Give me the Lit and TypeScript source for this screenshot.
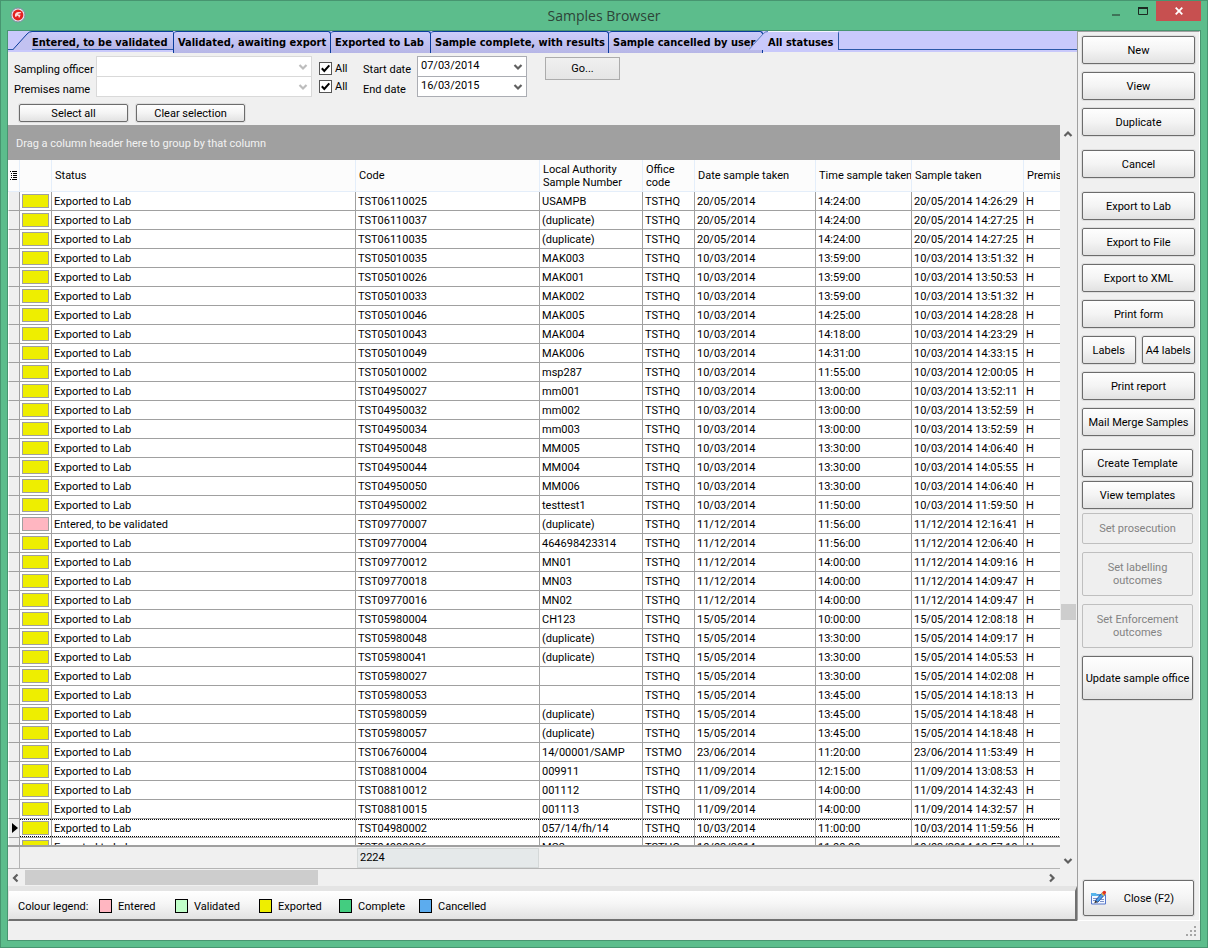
import { LitElement, html, css, svg, nothing } from "lit";
import { customElement, state } from "lit/decorators.js";
import { classMap } from "lit/directives/class-map.js";

type Status = "exported" | "entered";

interface Sample {
  status: Status;
  code: string;
  local: string;
  office: string;
  date: string;
  time: string;
  taken: string;
}

const STATUS_TEXT: Record<Status, string> = {
  exported: "Exported to Lab",
  entered: "Entered, to be validated",
};

const SAMPLES: Sample[] = `TST06110025|USAMPB|TSTHQ|20/05/2014|14:24:00|14:26:29
TST06110037|(duplicate)|TSTHQ|20/05/2014|14:24:00|14:27:25
TST06110035|(duplicate)|TSTHQ|20/05/2014|14:24:00|14:27:25
TST05010035|MAK003|TSTHQ|10/03/2014|13:59:00|13:51:32
TST05010026|MAK001|TSTHQ|10/03/2014|13:59:00|13:50:53
TST05010033|MAK002|TSTHQ|10/03/2014|13:59:00|13:51:32
TST05010046|MAK005|TSTHQ|10/03/2014|14:25:00|14:28:28
TST05010043|MAK004|TSTHQ|10/03/2014|14:18:00|14:23:29
TST05010049|MAK006|TSTHQ|10/03/2014|14:31:00|14:33:15
TST05010002|msp287|TSTHQ|10/03/2014|11:55:00|12:00:05
TST04950027|mm001|TSTHQ|10/03/2014|13:00:00|13:52:11
TST04950032|mm002|TSTHQ|10/03/2014|13:00:00|13:52:59
TST04950034|mm003|TSTHQ|10/03/2014|13:00:00|13:52:59
TST04950048|MM005|TSTHQ|10/03/2014|13:30:00|14:06:40
TST04950044|MM004|TSTHQ|10/03/2014|13:30:00|14:05:55
TST04950050|MM006|TSTHQ|10/03/2014|13:30:00|14:06:40
TST04950002|testtest1|TSTHQ|10/03/2014|11:50:00|11:59:50
TST09770007|(duplicate)|TSTHQ|11/12/2014|11:56:00|12:16:41|entered
TST09770004|464698423314|TSTHQ|11/12/2014|11:56:00|12:06:40
TST09770012|MN01|TSTHQ|11/12/2014|14:00:00|14:09:16
TST09770018|MN03|TSTHQ|11/12/2014|14:00:00|14:09:47
TST09770016|MN02|TSTHQ|11/12/2014|14:00:00|14:09:47
TST05980004|CH123|TSTHQ|15/05/2014|10:00:00|12:08:18
TST05980048|(duplicate)|TSTHQ|15/05/2014|13:30:00|14:09:17
TST05980041|(duplicate)|TSTHQ|15/05/2014|13:30:00|14:05:53
TST05980027||TSTHQ|15/05/2014|13:30:00|14:02:08
TST05980053||TSTHQ|15/05/2014|13:45:00|14:18:13
TST05980059|(duplicate)|TSTHQ|15/05/2014|13:45:00|14:18:48
TST05980057|(duplicate)|TSTHQ|15/05/2014|13:45:00|14:18:48
TST06760004|14/00001/SAMP|TSTMO|23/06/2014|11:20:00|11:53:49
TST08810004|009911|TSTHQ|11/09/2014|12:15:00|13:08:53
TST08810012|001112|TSTHQ|11/09/2014|14:00:00|14:32:43
TST08810015|001113|TSTHQ|11/09/2014|14:00:00|14:32:57
TST04980002|057/14/fh/14|TSTHQ|10/03/2014|11:00:00|11:59:56
TST04980036|MC2|TSTHQ|10/03/2014|11:00:00|13:57:19`
  .split("\n")
  .map((line) => {
    const [code, local, office, date, time, clock, status] = line.split("|");
    return { status: (status ?? "exported") as Status, code, local, office, date, time, taken: `${date} ${clock}` };
  });

const TABS = [
  "Entered, to be validated",
  "Validated, awaiting export",
  "Exported to Lab",
  "Sample complete, with results",
  "Sample cancelled by user",
  "All statuses",
];

const LEGEND = [
  ["entered", "Entered"],
  ["validated", "Validated"],
  ["exported", "Exported"],
  ["complete", "Complete"],
  ["cancelled", "Cancelled"],
];

const chevron = (dir: "up" | "down" | "left" | "right") => {
  const d = {
    up: "M1.5 6 5 2.5 8.5 6",
    down: "M1.5 3 5 6.5 8.5 3",
    left: "M6.5 1.5 3 5 6.5 8.5",
    right: "M3 1.5 6.5 5 3 8.5",
  }[dir];
  return html`<svg class="chev" width="10" height="10" viewBox="0 0 10 10" aria-hidden="true">${svg`<path d=${d} fill="none" stroke="currentColor" stroke-width="2.2"/>`}</svg>`;
};

const shared = css`
  :host {
    box-sizing: border-box;
    font: 11px/13px Roboto, "Liberation Sans", sans-serif;
    color: #000;
  }
  *,
  *::before,
  *::after {
    box-sizing: border-box;
  }
  button,
  select,
  input {
    font: inherit;
    color: inherit;
    margin: 0;
  }
  svg {
    display: block;
  }
  .btn {
    padding: 0 2px;
    border: 1px solid #6c6c6c;
    border-radius: 2px;
    background: linear-gradient(#fefefe, #f4f4f4 50%, #e2e2e2);
    box-shadow: 0 0 0 1px #dedede;
    text-align: center;
  }
  .btn:disabled {
    border-color: #bfbfbf;
    background: #efefef;
    box-shadow: none;
    color: #838383;
  }
`;

@customElement("sample-tabs")
class SampleTabs extends LitElement {
  @state() private active = 5;

  static styles = [
    shared,
    css`
      :host {
        display: block;
        background: #c9c9fb;
        padding-bottom: 2px;
      }
      .tabs {
        display: grid;
        grid-template-columns: 161px 157px 100px 178px 154px 76px;
        height: 19px;
        padding-left: 5px;
        border-bottom: 1px solid #2c58a8;
      }
      .tab {
        display: flex;
        min-width: 0;
        padding: 0 0 0 4px;
        border: 0;
        border-top: 1px solid #0a3c9c;
        border-right: 1px solid #0a3c9c;
        border-top-right-radius: 3px;
        border-top-left-radius: 3px;
        background: linear-gradient(#cdcdfb, #b6b6e6);
        font: bold 11px/21px "DejaVu Sans Condensed", "DejaVu Sans", sans-serif;
        white-space: nowrap;
      }
      .tab.slanted {
        padding: 0;
        border-top: 0;
        background: none;
      }
      .face {
        flex: 1;
        text-align: left;
        border-top: 1px solid #0a3c9c;
        background: linear-gradient(#cdcdfb, #b6b6e6);
        height: 18px;
      }
      .tab.active {
        position: relative;
        z-index: 1;
        height: 19px;
        margin-left: -14px;
        border-right-color: #2c58a8;
      }
      .active .face {
        height: 19px;
        border-top-color: #f6f6ff;
        background: #c9c9fb;
      }
    `,
  ];

  render() {
    return html`<div class="tabs" role="tablist">
      ${TABS.map((t, i) => {
        const on = i === this.active;
        const slanted = i === 0 || on;
        return html`<button
          type="button"
          role="tab"
          aria-selected=${on}
          class=${classMap({ tab: true, slanted, active: on })}
          @click=${() => (this.active = i)}
        >
          ${slanted
            ? html`<svg width="19" height="19" viewBox="0 0 19 19" aria-hidden="true">
                <path d="M0 19 14 3Q16 .5 19 .5V19Z" fill="${on ? "#c9c9fb" : "#c2c2f1"}" />
                <path d="M0 18.5 14 3Q16 .5 19 .5" fill="none" stroke="${on ? "#5a7cc0" : "#0a3c9c"}" />
              </svg>`
            : nothing}
          ${slanted ? html`<span class="face">${t}</span>` : html`<span>${t}</span>`}
        </button>`;
      })}
    </div>`;
  }
}

@customElement("sample-filters")
class SampleFilters extends LitElement {
  static styles = [
    shared,
    css`
      :host {
        display: block;
        padding: 4px 6px 3px;
      }
      .fields {
        display: flex;
        align-items: flex-start;
      }
      .labels {
        display: grid;
        grid-auto-rows: 20px;
        align-items: center;
        padding-top: 3px;
      }
      .who {
        width: 82px;
      }
      .when {
        width: 54px;
      }
      .combos {
        display: grid;
        grid-auto-rows: 20px;
        padding-bottom: 1px;
      }
      .officer {
        width: 216px;
      }
      .dates {
        width: 110px;
      }
      .combo {
        position: relative;
        height: 21px;
        color: #606060;
      }
      .combo.off {
        color: #bdbdbd;
      }
      select {
        width: 100%;
        height: 21px;
        padding: 0 20px 2px 3px;
        border: 1px solid #abadb3;
        border-radius: 0;
        background: #fff;
        appearance: none;
        color: #000;
        font-size: 11px;
        opacity: 1;
      }
      .off select {
        border-color: #d9d9d9;
      }
      .chev {
        position: absolute;
        right: 4px;
        top: 6px;
        pointer-events: none;
      }
      .checks {
        display: grid;
        grid-auto-rows: 18px;
        padding: 3px 0 0 7px;
        width: 51px;
      }
      .check {
        display: flex;
        align-items: center;
        gap: 3px;
      }
      .check input {
        appearance: none;
        width: 13px;
        height: 13px;
        border: 1px solid #555;
        background: #fff;
      }
      .check input:checked {
        background: #fff
          url("data:image/svg+xml,%3Csvg xmlns='http://www.w3.org/2000/svg' viewBox='0 0 11 11'%3E%3Cpath d='M1.8 5.3 4.3 8 9.3 2.3' fill='none' stroke='%23000' stroke-width='2'/%3E%3C/svg%3E");
      }
      .go {
        width: 75px;
        height: 23px;
        margin: 1px 0 0 18px;
        border: 1px solid #acacac;
        background: linear-gradient(#f0f0f0, #e5e5e5);
      }
      .actions {
        display: flex;
        gap: 8px;
        padding: 5px 5px 0;
      }
      .actions .btn {
        width: 109px;
        height: 18px;
      }
    `,
  ];

  render() {
    return html`
      <div class="fields">
        <div class="labels who">
          <label for="officer">Sampling officer</label>
          <label for="premises">Premises name</label>
        </div>
        <div class="combos officer">
          <div class="combo off"><select id="officer" disabled><option></option></select>${chevron("down")}</div>
          <div class="combo off"><select id="premises" disabled><option></option></select>${chevron("down")}</div>
        </div>
        <div class="checks">
          <label class="check"><input type="checkbox" checked />All</label>
          <label class="check"><input type="checkbox" checked />All</label>
        </div>
        <div class="labels when">
          <label for="start">Start date</label>
          <label for="end">End date</label>
        </div>
        <div class="combos dates">
          <div class="combo"><select id="start"><option>07/03/2014</option></select>${chevron("down")}</div>
          <div class="combo"><select id="end"><option>16/03/2015</option></select>${chevron("down")}</div>
        </div>
        <button type="button" class="go">Go...</button>
      </div>
      <div class="actions">
        <button type="button" class="btn">Select all</button>
        <button type="button" class="btn">Clear selection</button>
      </div>
    `;
  }
}

@customElement("sample-grid")
class SampleGrid extends LitElement {
  @state() private current = 33;

  static styles = [
    shared,
    css`
      :host {
        display: grid;
        grid-template-columns: minmax(0, 1fr) 17px;
        grid-template-rows: minmax(0, 1fr) 17px;
        min-height: 0;
        background: #f0f0f0;
      }
      .view {
        display: flex;
        flex-direction: column;
        min-height: 0;
      }
      .group {
        flex: none;
        padding: 0 8px;
        background: #a0a0a0;
        color: #f2f2f2;
        line-height: 37px;
        height: 35px;
      }
      .rows {
        flex: 1;
        min-height: 0;
        overflow: hidden;
        background: #fff;
      }
      table {
        width: 100%;
        table-layout: fixed;
        border-collapse: separate;
        border-spacing: 0;
      }
      .c-mark {
        width: 12px;
      }
      .c-colour {
        width: 32px;
      }
      .c-status {
        width: 304px;
      }
      .c-code {
        width: 184px;
      }
      .c-local {
        width: 103px;
      }
      .c-office {
        width: 52px;
      }
      .c-date {
        width: 121px;
      }
      .c-time {
        width: 96px;
      }
      .c-taken {
        width: 112px;
      }
      th {
        height: 32px;
        padding: 0 0 0 3px;
        border-right: 1px solid #e4eefa;
        border-bottom: 1px solid #e4eefa;
        background: #fcfcfc;
        font-weight: normal;
        text-align: left;
        white-space: nowrap;
        overflow: hidden;
        vertical-align: middle;
      }
      th:first-child {
        padding-left: 2px;
      }
      td {
        height: 19px;
        padding: 2px 0 0 2px;
        border-right: 1px solid #a0a0a0;
        border-bottom: 1px solid #a0a0a0;
        line-height: 16px;
        white-space: nowrap;
        overflow: hidden;
      }
      th:last-child,
      td:last-child {
        border-right: 0;
      }
      .mark {
        padding: 0 0 0 3px;
        border-left: 1px solid #fff;
        background: #efefef;
      }
      .colour {
        padding: 0 0 0 2px;
      }
      .current td:not(.mark) {
        background:
          repeating-linear-gradient(90deg, #000 0 1px, #fff 1px 2px) 0 0 / 100% 1px no-repeat,
          repeating-linear-gradient(90deg, #000 0 1px, #fff 1px 2px) 0 100% / 100% 1px no-repeat;
        background-origin: padding-box;
      }
      .swatch {
        display: block;
        width: 27px;
        height: 14px;
        border: 1px solid #a0a0a0;
      }
      .exported {
        background: #eeee00;
      }
      .entered {
        background: #ffb6c1;
      }
      .summary {
        flex: none;
        display: grid;
        grid-template-columns: 12px 337px 182px;
        height: 24px;
        border-top: 2px solid #a0a0a0;
        border-bottom: 1px solid #b4b4b4;
      }
      .gutter {
        border-right: 1px solid #b4b4b4;
      }
      .count {
        grid-column: 3;
        margin: 1px 0;
        padding-left: 2px;
        border: 1px solid #d4d8d8;
        background: #e5e9ea;
        line-height: 18px;
      }
      .vbar,
      .hbar {
        display: flex;
        align-items: center;
        color: #606060;
      }
      .vbar {
        flex-direction: column;
        padding: 5px 1px 3px 0;
      }
      .vtrack {
        flex: 1;
        width: 15px;
        display: grid;
        grid-template-rows: 465fr 16px 236fr;
      }
      .vthumb {
        grid-row: 2;
        background: #cdcdcd;
      }
      .hbar {
        padding: 0 3px;
      }
      .htrack {
        flex: 1;
        height: 15px;
        margin: 0 4px;
        display: grid;
        grid-template-columns: 293fr 725fr;
      }
      .hthumb {
        background: #cdcdcd;
      }
    `,
  ];

  render() {
    return html`
      <div class="view">
        <div class="group">Drag a column header here to group by that column</div>
        <div class="rows">
          <table>
            <colgroup>
              ${["mark", "colour", "status", "code", "local", "office", "date", "time", "taken", "rest"].map(
                (c) => html`<col class="c-${c}" />`,
              )}
            </colgroup>
            <thead>
              <tr>
                <th>
                  <svg width="8" height="10" viewBox="0 0 8 10" aria-hidden="true">
                    <path d="M0 .5h1M2 .5h5M1 2.5h1M3 2.5h4M1 4.5h1M3 4.5h4M1 6.5h1M3 6.5h4M0 8.5h1M2 8.5h5" stroke="#000" />
                  </svg>
                </th>
                <th></th>
                <th>Status</th>
                <th>Code</th>
                <th>Local Authority<br />Sample Number</th>
                <th>Office<br />code</th>
                <th>Date sample taken</th>
                <th>Time sample taken</th>
                <th>Sample taken</th>
                <th>Premises</th>
              </tr>
            </thead>
            <tbody>
              ${SAMPLES.map(
                (s, i) => html`<tr class=${classMap({ current: i === this.current })} @click=${() => (this.current = i)}>
                  <td class="mark">
                    ${i === this.current
                      ? html`<svg width="6" height="10" viewBox="0 0 6 10" aria-hidden="true"><path d="M0 0 6 5 0 10Z" /></svg>`
                      : nothing}
                  </td>
                  <td class="colour"><span class="swatch ${s.status}"></span></td>
                  <td>${STATUS_TEXT[s.status]}</td>
                  <td>${s.code}</td>
                  <td>${s.local}</td>
                  <td>${s.office}</td>
                  <td>${s.date}</td>
                  <td>${s.time}</td>
                  <td>${s.taken}</td>
                  <td>H</td>
                </tr>`,
              )}
            </tbody>
          </table>
        </div>
        <div class="summary">
          <span class="gutter"></span>
          <span class="count">2224</span>
        </div>
      </div>
      <div class="vbar">
        ${chevron("up")}
        <div class="vtrack"><span class="vthumb"></span></div>
        ${chevron("down")}
      </div>
      <div class="hbar">
        ${chevron("left")}
        <div class="htrack"><span class="hthumb"></span></div>
        ${chevron("right")}
      </div>
    `;
  }
}

@customElement("sample-actions")
class SampleActions extends LitElement {
  static styles = [
    shared,
    css`
      :host {
        display: flex;
        flex-direction: column;
        padding: 4px 4px 4px 4px;
        border-left: 1px solid #a0a0a0;
        border-top: 1px solid #a0a0a0;
        border-bottom: 1px solid #fff;
        border-right: 1px solid #fff;
      }
      .set {
        display: grid;
        gap: 8px;
        grid-auto-rows: 28px;
        margin-bottom: 14px;
      }
      .pair {
        display: grid;
        grid-template-columns: 1fr 1fr;
        gap: 6px;
      }
      .pair .btn {
        padding: 0;
        white-space: nowrap;
      }
      .last {
        margin-bottom: 13px;
      }
      .tight {
        gap: 4px;
        margin: 0 2px 8px 0;
      }
      .tight .btn:disabled {
        height: 31px;
      }
      .tall {
        grid-auto-rows: 44px;
        margin: 3px 2px 0 0;
      }
      .tall .btn {
        padding: 0;
      }
      .close {
        display: flex;
        align-items: center;
        height: 36px;
        margin: auto 1px 0;
        padding: 0 19px 0 6px;
        justify-content: space-between;
      }
    `,
  ];

  private btn(label: unknown, disabled = false) {
    return html`<button type="button" class="btn" ?disabled=${disabled}>${label}</button>`;
  }

  render() {
    return html`
      <div class="set">${["New", "View", "Duplicate"].map((l) => this.btn(l))}</div>
      <div class="set">${this.btn("Cancel")}</div>
      <div class="set last">
        ${["Export to Lab", "Export to File", "Export to XML", "Print form"].map((l) => this.btn(l))}
        <div class="pair">${this.btn("Labels")}${this.btn("A4 labels")}</div>
        ${["Print report", "Mail Merge Samples"].map((l) => this.btn(l))}
      </div>
      <div class="set tight">
        ${this.btn("Create Template")} ${this.btn("View templates")} ${this.btn("Set prosecution", true)}
      </div>
      <div class="set tall">
        ${this.btn(html`Set labelling<br />outcomes`, true)} ${this.btn(html`Set Enforcement<br />outcomes`, true)}
        ${this.btn("Update sample office")}
      </div>
      <button type="button" class="btn close">
        <svg width="17" height="16" viewBox="0 0 17 16" aria-hidden="true">
          <path d="M1.5 3.5h4l1 1h9v9.5h-14Z" fill="#f4f8ff" stroke="#5577cc" />
          <path d="M1 3h5l1 1.5h8V6H1Z" fill="#58b4ea" />
          <path d="M3 8.5h4M3 10.5h3M10 11.5h4M11 9.5h3" stroke="#7a90c8" />
          <path d="M5.6 10.4 11.6 3.4 14 5.4 7.8 12.2Z" fill="#4aa0e8" stroke="#2b4f9a" />
          <path d="M4.2 13.2 5.4 10.4 7.8 12.2Z" fill="#333" />
          <path d="m11.2 3.8 1-1 2.4 2.1-1 1Z" fill="#f0c040" />
          <path d="m12 2.8 1.2-1.6q1.2-1 2.4 0 1 1.1.1 2.2l-1.2 1.5Z" fill="#e0301c" />
        </svg>
        <span>Close (F2)</span>
      </button>
    `;
  }
}

@customElement("app-root")
class AppRoot extends LitElement {
  static styles = [
    shared,
    css`
      :host {
        display: flex;
        flex-direction: column;
        height: 100vh;
        padding: 0 6px 6px;
        border: 1px solid #479570;
        background: #5cbd8c;
      }
      .title {
        flex: none;
        display: grid;
        grid-template-columns: 1fr auto 1fr;
        height: 29px;
      }
      .logo {
        margin: 6px 0 0 3px;
      }
      h1 {
        margin: 0;
        font: 14px/29px "Open Sans", "Noto Sans", sans-serif;
        color: #2d4438;
      }
      .controls {
        display: flex;
        justify-content: flex-end;
      }
      .controls button {
        display: grid;
        place-items: center;
        width: 27px;
        height: 20px;
        padding: 0;
        border: 0;
        background: none;
      }
      .controls .shut {
        width: 45px;
        background: #c75050;
      }
      .client {
        flex: 1;
        display: flex;
        flex-direction: column;
        min-height: 0;
        border: 1px solid #479570;
        background: #f0f0f0;
      }
      .body {
        flex: 1;
        display: grid;
        grid-template-columns: minmax(0, 1fr) 123px;
        grid-template-rows: minmax(0, 1fr);
        min-height: 0;
      }
      main {
        display: flex;
        flex-direction: column;
        min-height: 0;
      }
      sample-grid {
        flex: 1;
      }
      .legend {
        display: flex;
        align-items: center;
        height: 35px;
        padding: 2px 0 0 9px;
        border-top: 5px solid #e4e4e4;
        border-right: 2px solid #707070;
        border-bottom: 2px solid #707070;
        border-left: 1px solid #e4e4e4;
        background: linear-gradient(#fff, #f6f6f6 45%, #e2e2e2);
      }
      .caption {
        width: 81px;
      }
      .items {
        display: grid;
        grid-template-columns: 76px 84px 80px 80px auto;
        margin: 0;
        padding: 0;
        list-style: none;
      }
      .items li {
        display: flex;
        align-items: center;
        gap: 6px;
      }
      .key {
        width: 13px;
        height: 14px;
        border: 1px solid #000;
      }
      .entered {
        background: #ffb6c1;
      }
      .validated {
        background: #c1ffc9;
      }
      .exported {
        background: #eeee00;
      }
      .complete {
        background: #43cd80;
      }
      .cancelled {
        background: #5cacee;
      }
      .status {
        flex: none;
        display: flex;
        justify-content: flex-end;
        align-items: flex-end;
        height: 19px;
        padding: 0 3px 3px;
      }
    `,
  ];

  render() {
    return html`
      <header class="title">
        <svg class="logo" width="16" height="16" viewBox="0 0 16 16" aria-hidden="true">
          <circle cx="8" cy="8" r="7" fill="#e4e6ec" stroke="#7f8ba3" />
          <circle cx="8" cy="8" r="5.4" fill="#e32020" />
          <path d="M5 9.5q-.6-4 3-4.600h3.400l-1.200 1.500H8.800L8 7.500l2.600.3-1 2.600-1 .2V9.200L7 8.600l-.8 1.300Z" fill="#fbdcdc" />
        </svg>
        <h1>Samples Browser</h1>
        <div class="controls">
          <button type="button" aria-label="Minimize">
            <svg width="8" height="10" viewBox="0 0 8 10"><path d="M0 9h8" stroke="#3f7459" stroke-width="2" /></svg>
          </button>
          <button type="button" aria-label="Maximize">
            <svg width="10" height="8" viewBox="0 0 10 8">
              <path d="M.5 1v6.5h9V1M0 1h10" fill="none" stroke="#1c2a22" stroke-width="1" />
              <path d="M0 1h10" stroke="#1c2a22" stroke-width="2" />
            </svg>
          </button>
          <button type="button" class="shut" aria-label="Close window">
            <svg width="8" height="8" viewBox="0 0 8 8"><path d="m.7.7 6.6 6.6M7.3.7.7 7.3" stroke="#fff" stroke-width="1.8" /></svg>
          </button>
        </div>
      </header>
      <div class="client">
        <div class="body">
          <main>
            <sample-tabs></sample-tabs>
            <sample-filters></sample-filters>
            <sample-grid></sample-grid>
            <div class="legend">
              <span class="caption">Colour legend:</span>
              <ul class="items">
                ${LEGEND.map(([k, l]) => html`<li><span class="key ${k}"></span>${l}</li>`)}
              </ul>
            </div>
          </main>
          <sample-actions></sample-actions>
        </div>
        <footer class="status">
          <svg width="11" height="11" viewBox="0 0 11 11" aria-hidden="true">
            <path d="M8 1h2M8 5h2M8 9h2M4 5h2M4 9h2M0 9h2" stroke="#a6a6a6" stroke-width="2" />
          </svg>
        </footer>
      </div>
    `;
  }
}
